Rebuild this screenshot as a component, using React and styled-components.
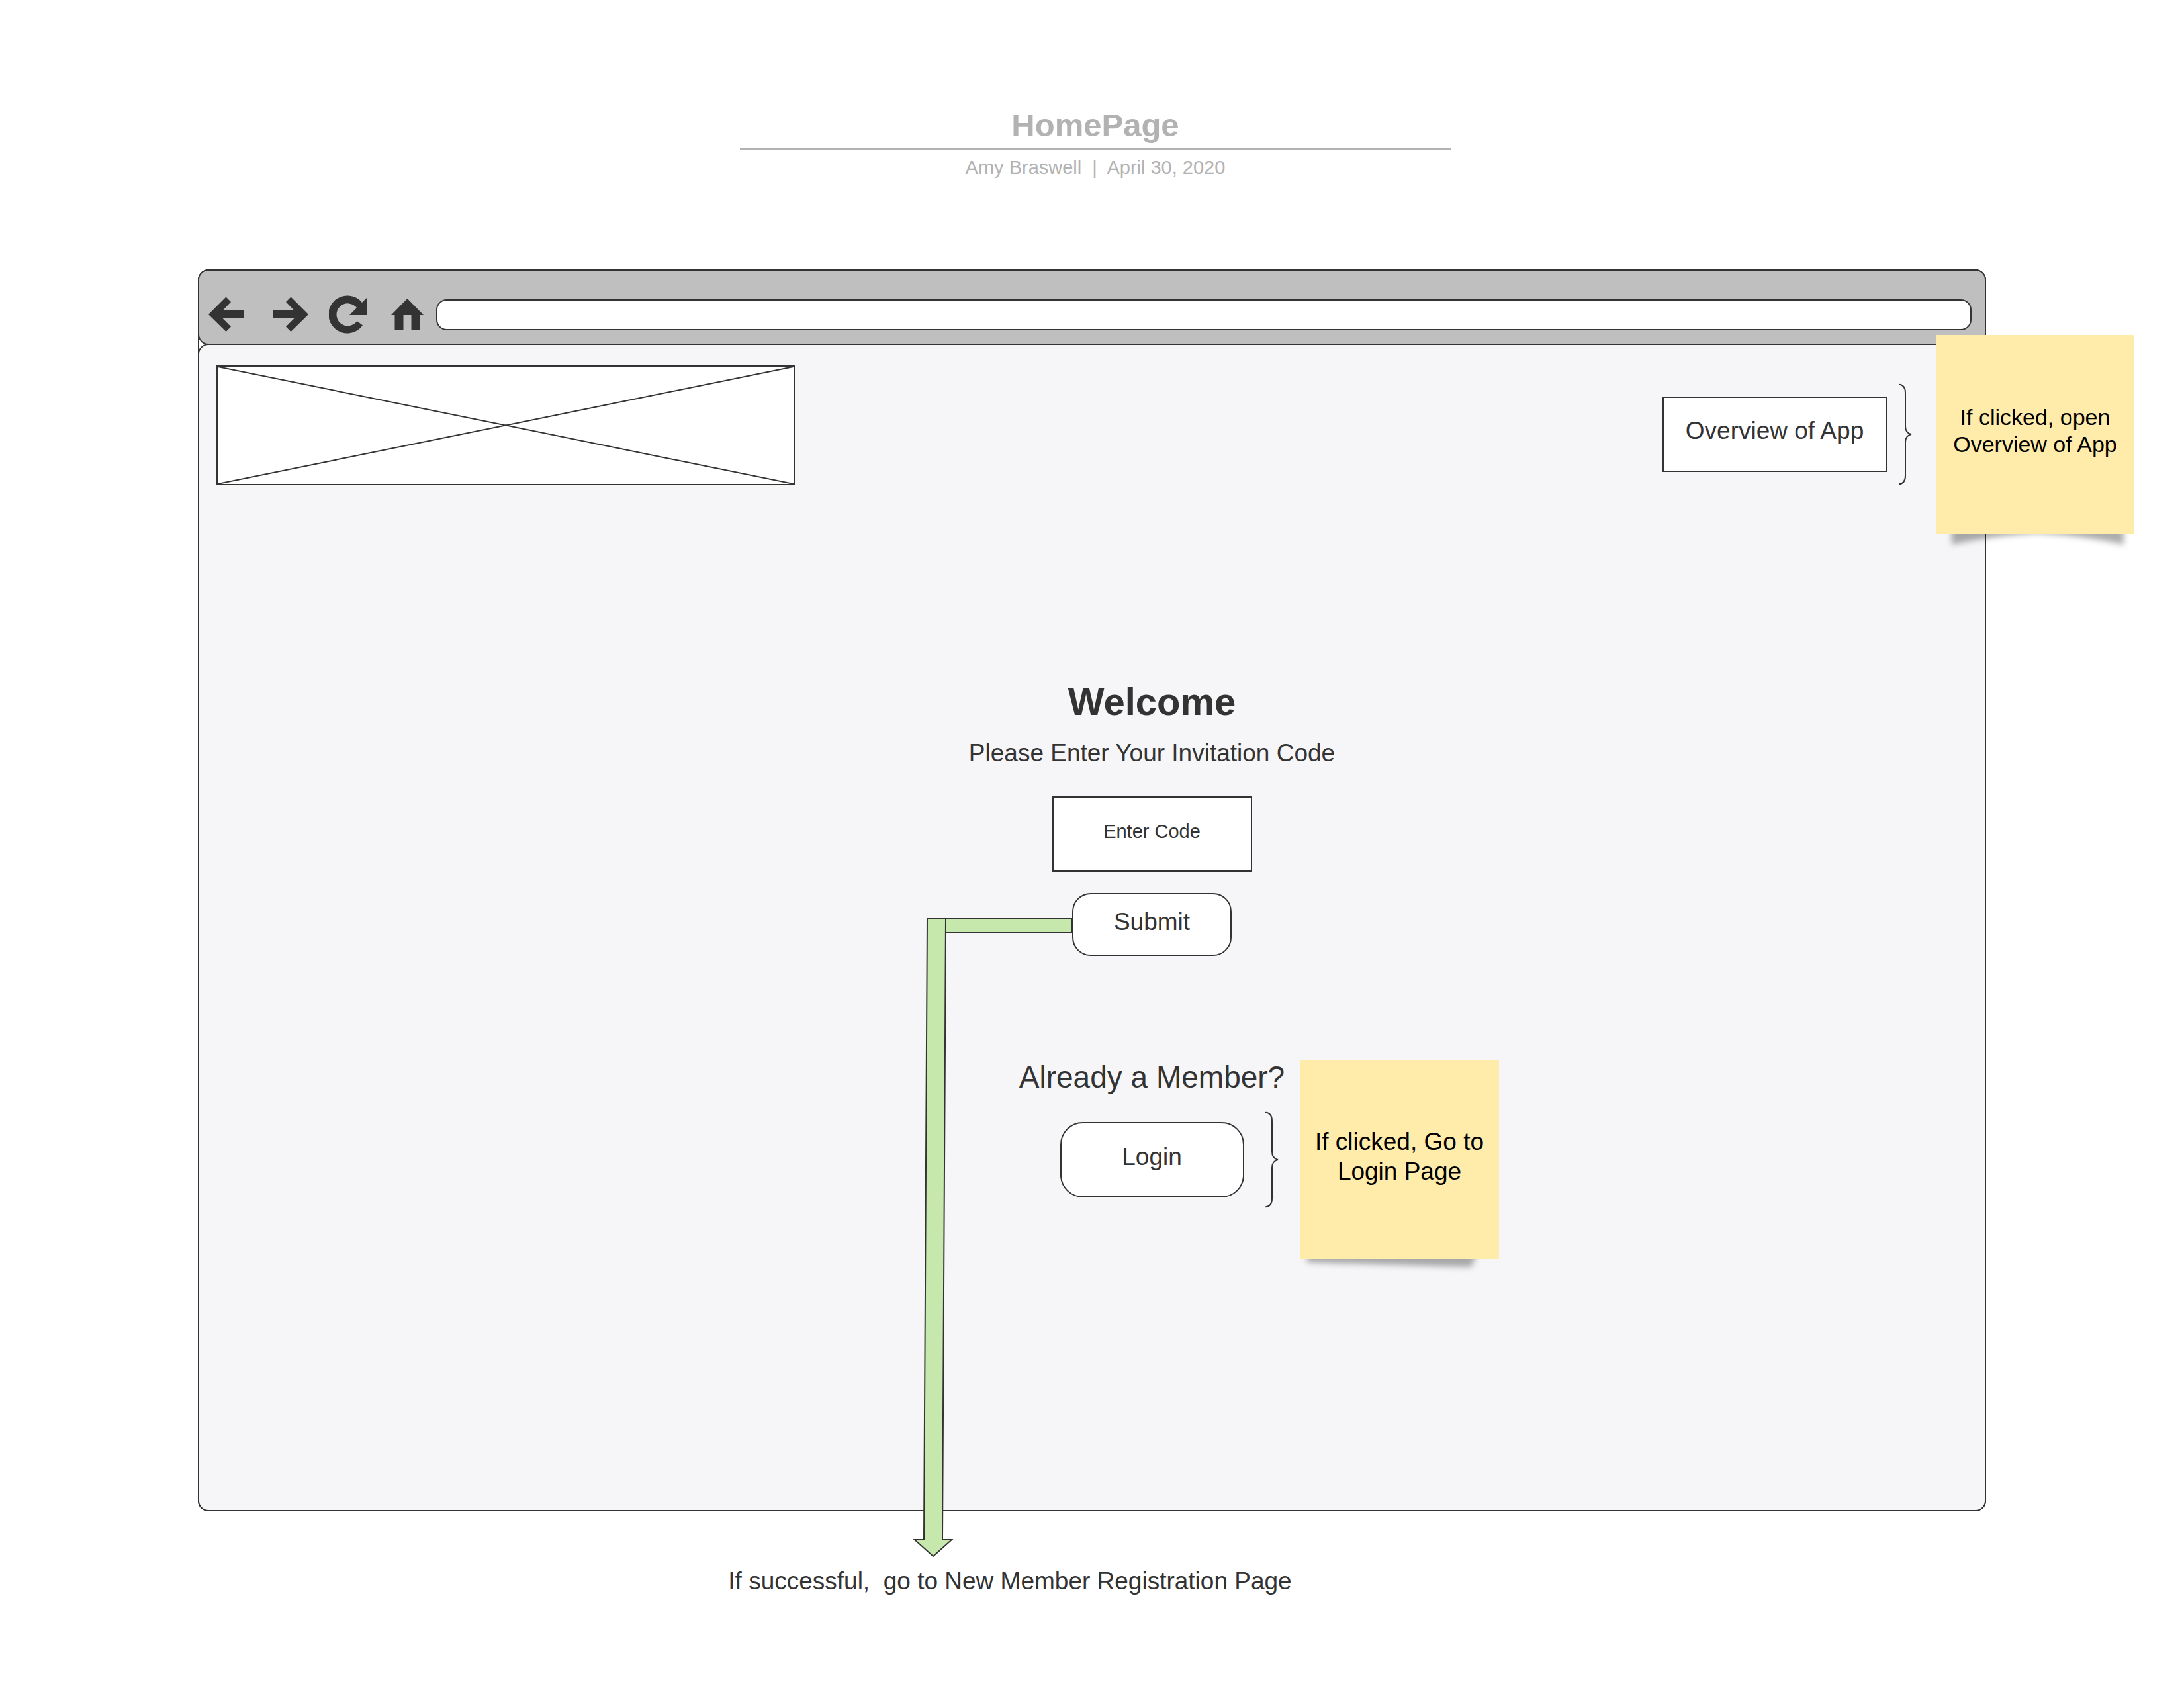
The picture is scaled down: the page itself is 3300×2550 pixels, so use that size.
import React from "react";
import styled, { createGlobalStyle } from "styled-components";

const INK = "#333333";
const MUTED = "#b2b2b2";

const GlobalStyle = createGlobalStyle`
  *, *::before, *::after { box-sizing: border-box; }
  body {
    margin: 0;
    background: #ffffff;
    color: ${INK};
    font-family: "Liberation Sans", Arial, Helvetica, sans-serif;
  }
  h1, h2, p { margin: 0; }
  button, input { font: inherit; color: inherit; }
`;

const Page = styled.main`
  display: flex;
  flex-direction: column;
  padding: 160px 299px 139px;
`;

const DocumentHeader = styled.header`
  display: flex;
  flex-direction: column;
  align-self: center;
  gap: 9px;
  width: 1074px;
  margin-left: 10px;
  text-align: center;
  color: ${MUTED};
`;

const DocumentTitle = styled.h1`
  padding-bottom: 5px;
  border-bottom: 4px solid ${MUTED};
  font-size: 49px;
  line-height: 58px;
`;

const Byline = styled.p`
  font-size: 29px;
  line-height: 34px;
  white-space: pre;
`;

const BrowserFrame = styled.section`
  display: flex;
  flex-direction: column;
  margin-top: 137px;
  border: 2px solid ${INK};
  border-radius: 16px;
`;

const BrowserBar = styled.nav`
  display: grid;
  grid-template-columns: 98px 84px 94px 68px 1fr;
  align-items: center;
  height: 114px;
  margin: -2px;
  padding: 22px 20px 0 14px;
  border: 2px solid ${INK};
  border-radius: 16px;
  background: #bfbfbf;
`;

const IconButton = styled.button`
  display: flex;
  justify-content: flex-start;
  padding: 0;
  border: 0;
  background: none;

  svg { display: block; fill: ${INK}; }
`;

const AddressInput = styled.input`
  width: 100%;
  height: 47px;
  padding: 0 16px;
  border: 2px solid ${INK};
  border-radius: 16px;
  background: #ffffff;
  font-size: 29px;
`;

const Viewport = styled.div`
  display: flex;
  flex-direction: column;
  margin: 0 -2px -2px;
  padding: 31px 148px 472px 26px;
  border: 2px solid ${INK};
  border-radius: 16px;
  background: #f6f6f8;
`;

const TopRow = styled.div`
  display: flex;
  justify-content: space-between;
  align-items: flex-end;
`;

const ImagePlaceholder = styled.svg`
  display: block;
  width: 874px;
  height: 181px;
  border: 2px solid ${INK};
  background: #ffffff;
`;

const Anchor = styled.div`
  position: relative;
  display: flex;
  margin-bottom: ${(p) => p.$below || 0}px;
`;

const BoxButton = styled.button`
  width: ${(p) => p.$width}px;
  height: ${(p) => p.$height}px;
  padding: 0 0 ${(p) => p.$lift}px;
  border: 2px solid ${INK};
  border-radius: ${(p) => p.$radius || 0}px;
  background: #ffffff;
  font-size: 37px;
  line-height: 44px;
`;

const Form = styled.form`
  display: flex;
  flex-direction: column;
  align-items: center;
  margin: 293px 0 0 303px;
`;

const Welcome = styled.h2`
  font-size: 58px;
  line-height: 68px;
`;

const CodeLabel = styled.label`
  margin: 22px 0 43px;
  font-size: 37px;
  line-height: 44px;
`;

const CodeInput = styled.input`
  width: 302px;
  height: 114px;
  margin-bottom: 32px;
  padding: 0 0 8px;
  border: 2px solid ${INK};
  border-radius: 0;
  background: #ffffff;
  font-size: 29px;
  text-align: center;

  &::placeholder { color: ${INK}; opacity: 1; }
`;

const MemberPrompt = styled.p`
  margin: 156px 0 41px;
  font-size: 46px;
  line-height: 54px;
`;

const Brace = styled.svg`
  position: absolute;
  top: 50%;
  left: calc(100% + ${(p) => p.$gap}px);
  transform: translateY(-50%);
  fill: none;
  stroke: ${INK};
  stroke-width: 2;
`;

const StickyNote = styled.aside`
  position: absolute;
  top: 50%;
  left: calc(100% + ${(p) => p.$gap}px);
  width: 300px;
  height: 300px;
  margin-top: -150px;
`;

const StickyShadow = styled.svg`
  position: absolute;
  top: 0;
  left: 0;
  overflow: visible;
`;

const StickyPaper = styled.div`
  position: relative;
  display: flex;
  align-items: center;
  justify-content: center;
  height: 100%;
  padding-bottom: 10px;
  background: #ffebaa;
  color: #000000;
  font-size: ${(p) => p.$size}px;
  line-height: ${(p) => p.$line}px;
  text-align: center;
  white-space: pre-line;
`;

const FlowArrow = styled.svg`
  position: absolute;
  top: 37px;
  right: calc(100% - 2px);
  fill: #c7e8ac;
  stroke: ${INK};
  stroke-width: 2;
  pointer-events: none;
`;

const FlowCaption = styled.p`
  align-self: center;
  margin: 84px 248px 0 0;
  font-size: 37px;
  line-height: 44px;
  white-space: pre;
`;

function BraceMark({ height, gap }) {
  const mid = height / 2;
  return (
    <Brace $gap={gap} width="20" height={height} aria-hidden="true">
      <path
        d={`M0 1 Q10 2 10 14 V${mid - 12} Q10 ${mid - 2} 19 ${mid} Q10 ${mid + 2} 10 ${mid + 12} V${height - 14} Q10 ${height - 2} 0 ${height - 1}`}
      />
    </Brace>
  );
}

function Note({ id, gap, size, line, shadow, children }) {
  return (
    <StickyNote $gap={gap}>
      <StickyShadow width="300" height="300" aria-hidden="true">
        <defs>
          <filter id={id} x="-20%" y="-60%" width="140%" height="220%">
            <feGaussianBlur stdDeviation="5" />
          </filter>
        </defs>
        <path d={shadow} fill="#000000" fillOpacity="0.32" filter={`url(#${id})`} />
      </StickyShadow>
      <StickyPaper $size={size} $line={line}>
        {children}
      </StickyPaper>
    </StickyNote>
  );
}

export default function App() {
  return (
    <>
      <GlobalStyle />
      <Page>
        <DocumentHeader>
          <DocumentTitle>HomePage</DocumentTitle>
          <Byline>{"Amy Braswell  |  April 30, 2020"}</Byline>
        </DocumentHeader>

        <BrowserFrame>
          <BrowserBar aria-label="Browser">
            <IconButton type="button" aria-label="Back">
              <svg width="53" height="54" viewBox="0 0 53 54">
                <path d="M0 27 L26.500 0.500 L34 8 L21.500 21 H53 V33 H21.500 L34 45.500 L26.500 53 Z" />
              </svg>
            </IconButton>
            <IconButton type="button" aria-label="Forward">
              <svg width="53" height="54" viewBox="0 0 53 54">
                <path d="M53 27 L26.500 0.500 L19 8 L31.500 21 H0 V33 H31.500 L19 45.500 L26.500 53 Z" />
              </svg>
            </IconButton>
            <IconButton type="button" aria-label="Reload">
              <svg width="59" height="58" viewBox="0 0 59 58">
                <path d="M58 3 V30 H31 L42 19 A17 17 0 1 0 42.500 39 L51 45.500 A28.500 28.500 0 1 1 50 11 Z" />
              </svg>
            </IconButton>
            <IconButton type="button" aria-label="Home">
              <svg width="49" height="48" viewBox="0 0 49 48">
                <path d="M24.500 0 L49 25 H43.500 V48 H30.500 V25 H18.500 V48 H5.500 V25 H0 Z" />
              </svg>
            </IconButton>
            <AddressInput type="text" aria-label="Address" />
          </BrowserBar>

          <Viewport>
            <TopRow>
              <ImagePlaceholder
                viewBox="0 0 870 177"
                preserveAspectRatio="none"
                role="img"
                aria-label="Image placeholder"
              >
                <path d="M0 0 L870 177 M0 177 L870 0" stroke={INK} strokeWidth="2" />
              </ImagePlaceholder>
              <Anchor $below={20}>
                <BoxButton type="button" $width={339} $height={114} $lift={10}>
                  Overview of App
                </BoxButton>
                <BraceMark gap={18} height={153} />
                <Note
                  id="overview-shadow"
                  gap={74}
                  size={34}
                  line={41}
                  shadow="M24 284 H284 V317 Q220 303 154 299 Q90 303 24 317 Z"
                >
                  {"If clicked, open\nOverview of App"}
                </Note>
              </Anchor>
            </TopRow>

            <Form onSubmit={(event) => event.preventDefault()}>
              <Welcome>Welcome</Welcome>
              <CodeLabel htmlFor="invitation-code">Please Enter Your Invitation Code</CodeLabel>
              <CodeInput id="invitation-code" type="text" placeholder="Enter Code" />
              <Anchor>
                <FlowArrow width="242" height="968" aria-hidden="true">
                  <path d="M49 2 H240 V23 H49 Z" />
                  <path d="M21 2 H49 L44 940 H58 L30 965 L2 940 H16 Z" />
                </FlowArrow>
                <BoxButton type="submit" $width={241} $height={95} $radius={28} $lift={8}>
                  Submit
                </BoxButton>
              </Anchor>
              <MemberPrompt>Already a Member?</MemberPrompt>
              <Anchor>
                <BoxButton type="button" $width={278} $height={114} $radius={34} $lift={8}>
                  Login
                </BoxButton>
                <BraceMark gap={32} height={145} />
                <Note
                  id="login-shadow"
                  gap={85}
                  size={37}
                  line={45}
                  shadow="M10 284 H270 L258 312 Q140 309 10 305 Z"
                >
                  {"If clicked, Go to\nLogin Page"}
                </Note>
              </Anchor>
            </Form>
          </Viewport>
        </BrowserFrame>

        <FlowCaption>{"If successful,  go to New Member Registration Page"}</FlowCaption>
      </Page>
    </>
  );
}
